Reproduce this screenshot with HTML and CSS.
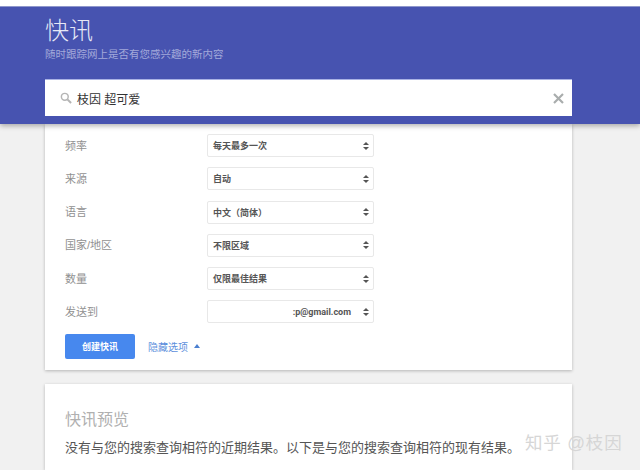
FILE: index.html
```html
<!DOCTYPE html>
<html>
<head>
    <title>快讯</title>
    <link rel="stylesheet" href="styles.css">
</head>
<body>
    <div class="header">
        <h1 class="title">快讯</h1>
        <div class="subtitle">随时跟踪网上是否有您感兴趣的新内容</div>
        <div class="search-box">
            <svg class="search-icon" width="12" height="12" viewBox="0 0 13 13">
                <circle cx="5.2" cy="5.2" r="3.7" fill="none" stroke="#b5b5b5" stroke-width="1.6"/>
                <path d="M8 8l4 4" stroke="#b5b5b5" stroke-width="2.2"/>
            </svg>
            <span class="search-text">枝因 超可爱</span>
            <svg class="clear-icon" width="11" height="11" viewBox="0 0 11 11">
                <path d="M1 1l9 9M10 1l-9 9" stroke="#a9adad" stroke-width="2.2"/>
            </svg>
        </div>
    </div>

    <div class="content">
        <div class="card options">
            <div class="option-row">
                <span class="option-label">频率</span>
                <div class="select"><span class="select-text">每天最多一次</span><span class="arrows"></span></div>
            </div>
            <div class="option-row">
                <span class="option-label">来源</span>
                <div class="select"><span class="select-text">自动</span><span class="arrows"></span></div>
            </div>
            <div class="option-row">
                <span class="option-label">语言</span>
                <div class="select"><span class="select-text">中文（简体）</span><span class="arrows"></span></div>
            </div>
            <div class="option-row">
                <span class="option-label">国家/地区</span>
                <div class="select"><span class="select-text">不限区域</span><span class="arrows"></span></div>
            </div>
            <div class="option-row">
                <span class="option-label">数量</span>
                <div class="select"><span class="select-text">仅限最佳结果</span><span class="arrows"></span></div>
            </div>
            <div class="option-row">
                <span class="option-label">发送到</span>
                <div class="select select-email"><span class="select-text">:p@gmail.com</span><span class="arrows"></span></div>
            </div>
            <div class="actions">
                <button class="button">创建快讯</button>
                <span class="toggle-link">隐藏选项</span>
                <span class="up-arrow"></span>
            </div>
        </div>

        <div class="card preview">
            <h2 class="preview-title">快讯预览</h2>
            <p class="preview-text">没有与您的搜索查询相符的近期结果。以下是与您的搜索查询相符的现有结果。</p>
        </div>
    </div>

    <div class="watermark">知乎 @枝因</div>
</body>
</html>
```

FILE: styles.css
```css
html {
    height: 100%;
    overflow: hidden;
}

body {
    margin: 0;
    height: 470px;
    overflow: hidden;
    position: relative;
    background: #f1f1f1;
    font-family: "Liberation Sans", "Noto Sans CJK SC", sans-serif;
    border-top: 6px solid #ffffff;
    box-sizing: border-box;
}

.header {
    position: relative;
    z-index: 1;
    height: 118px;
    box-sizing: border-box;
    padding: 10px 68px 0 45px;
    background: #4753b0;
    border-top: 1px solid #8f97cc;
    box-shadow: 0 2px 5px rgba(0, 0, 0, 0.3);
}

.title {
    margin: 0;
    font-size: 24px;
    line-height: 28px;
    font-weight: 300;
    color: #e6e8f6;
}

.subtitle {
    margin-top: 2px;
    font-size: 10.5px;
    line-height: 15px;
    color: #a3a9da;
}

.search-box {
    display: flex;
    align-items: center;
    height: 36px;
    margin-top: 18px;
    padding: 0 8px 0 15px;
    background: #ffffff;
    box-shadow: 0 -1px 0 #aab2e4;
}

.search-icon {
    margin-right: 5px;
}

.search-text {
    flex: 1;
    font-size: 12px;
    color: #333333;
}

.content {
    padding: 0 68px 0 45px;
}

.card {
    background: #ffffff;
    box-shadow: 0 1px 3px rgba(0, 0, 0, 0.25);
}

.options {
    height: 246px;
    box-sizing: border-box;
    padding: 10px 20px 0;
}

.option-row {
    display: flex;
    align-items: center;
    height: 23px;
    margin-bottom: 10.3px;
}

.option-label {
    width: 142px;
    padding-bottom: 2px;
    font-size: 11px;
    color: #919191;
}

.select {
    display: flex;
    align-items: center;
    justify-content: space-between;
    width: 167px;
    height: 23px;
    box-sizing: border-box;
    padding: 0 4px 0 5px;
    background: #ffffff;
    border: 1px solid #e8e8e8;
    border-radius: 2px;
}

.select-text {
    font-size: 9px;
    font-weight: bold;
    color: #555555;
}

.select-email {
    justify-content: flex-end;
    gap: 12px;
}

.select-email .select-text {
    font-family: Roboto, sans-serif;
}

.arrows {
    display: flex;
    flex-direction: column;
    gap: 2px;
}

.arrows::before,
.arrows::after {
    content: "";
    width: 0;
    height: 0;
    border-left: 3px solid transparent;
    border-right: 3px solid transparent;
}

.arrows::before {
    border-bottom: 3px solid #555555;
}

.arrows::after {
    border-top: 3px solid #555555;
}

.actions {
    display: flex;
    align-items: center;
    margin-top: 10.3px;
}

.button {
    width: 70px;
    height: 25px;
    padding: 0;
    border: none;
    border-radius: 2px;
    background: #4788ee;
    color: #ffffff;
    font-family: inherit;
    font-size: 9px;
    font-weight: bold;
}

.toggle-link {
    margin-left: 13px;
    font-size: 10px;
    color: #5e90dc;
}

.up-arrow {
    margin-left: 6px;
    width: 0;
    height: 0;
    border-left: 3.5px solid transparent;
    border-right: 3.5px solid transparent;
    border-bottom: 4px solid #4a7fd0;
}

.preview {
    margin-top: 14px;
    height: 86px;
    box-sizing: border-box;
    padding: 26px 20px 0;
}

.preview-title {
    margin: 0;
    font-size: 16px;
    line-height: 20px;
    font-weight: normal;
    color: #b0b0b0;
}

.preview-text {
    margin: 8px 0 0;
    width: 520px;
    font-size: 13px;
    line-height: 20px;
    white-space: nowrap;
    color: #555555;
}

.watermark {
    position: absolute;
    left: 525px;
    top: 427px;
    font-size: 17.5px;
    line-height: 20px;
    letter-spacing: 0.8px;
    color: #d6d6d6;
}
```
